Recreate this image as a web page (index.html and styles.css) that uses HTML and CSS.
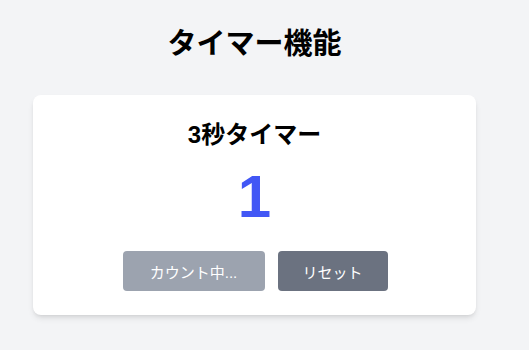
FILE: index.html
```html
<!DOCTYPE html>
<html lang="ja">
<head>
<meta charset="utf-8">
<link rel="stylesheet" href="styles.css">
</head>
<body>
<main class="page">
  <h1 class="page-title">タイマー機能</h1>
  <section class="card">
    <h2 class="card-title">3秒タイマー</h2>
    <div class="count">1</div>
    <div class="actions">
      <button class="btn btn-start" disabled>カウント中...</button>
      <button class="btn btn-reset">リセット</button>
    </div>
  </section>
</main>
</body>
</html>
```
FILE: styles.css
```css
* { box-sizing: border-box; }
html, body { margin: 0; padding: 0; }
body {
  background: #f3f4f6;
  font-family: "Liberation Sans", "Noto Sans CJK JP", sans-serif;
  color: #000;
  width: 529px;
  height: 350px;
  overflow: hidden;
}
.page {
  width: 443px;
  margin-left: 33px;
  padding-top: 26px;
}
.page-title {
  margin: 0 0 33px;
  font-size: 29px;
  line-height: 36px;
  font-weight: 700;
  text-align: center;
}
.card {
  background: #fff;
  border-radius: 8px;
  box-shadow: 0 4px 6px -1px rgba(0,0,0,0.1), 0 2px 4px -2px rgba(0,0,0,0.1);
  padding: 24px;
  text-align: center;
}
.card-title {
  margin: 0 0 16px;
  font-size: 24px;
  line-height: 32px;
  font-weight: 700;
}
.count {
  font-size: 60px;
  line-height: 60px;
  font-weight: 700;
  color: #4257f5;
  margin-bottom: 24px;
}
.actions {
  display: flex;
  justify-content: center;
  gap: 13px;
  padding-left: 1px;
}
.btn {
  height: 40px;
  border: none;
  border-radius: 4px;
  color: #fff;
  font-family: "Liberation Sans", "Noto Sans CJK JP", sans-serif;
  font-size: 15px;
  padding: 0;
}
.btn-start {
  width: 142px;
  background: #9ca3af;
}
.btn-reset {
  width: 110px;
  background: #6b7280;
}
```
